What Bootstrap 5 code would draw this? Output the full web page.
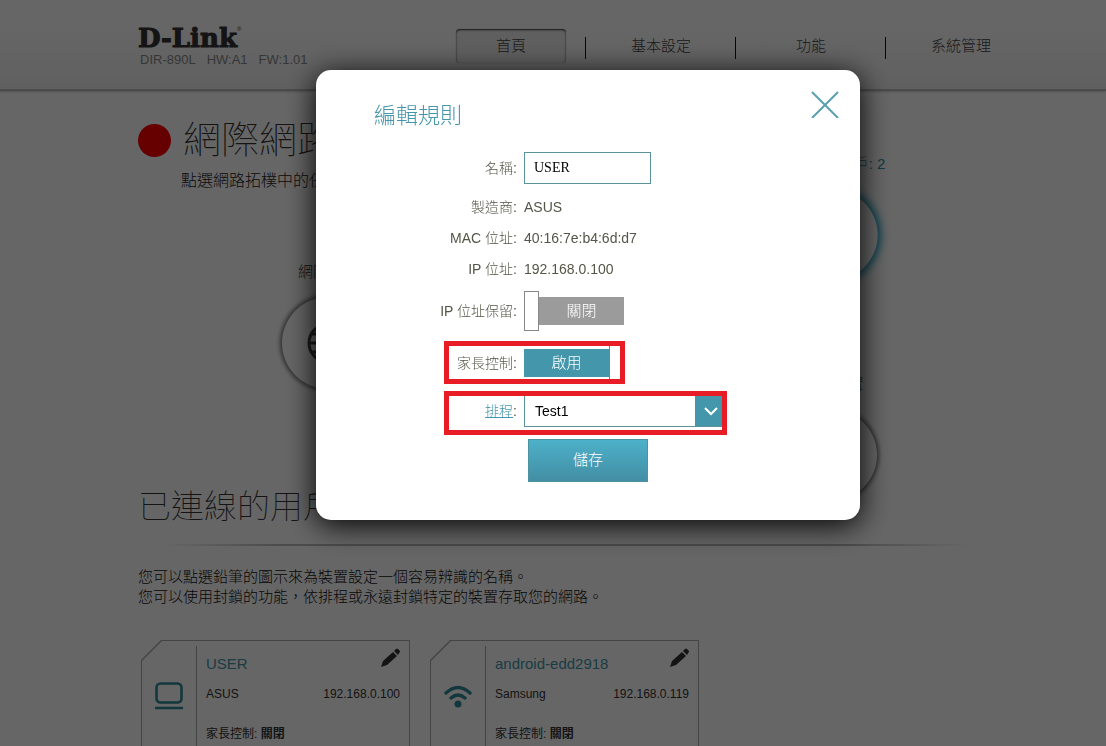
<!DOCTYPE html>
<html lang="zh-Hant">
<head>
<meta charset="utf-8">
<meta name="viewport" content="width=device-width, initial-scale=1">
<title>D-Link</title>
<link href="https://cdn.jsdelivr.net/npm/bootstrap@5.3.0/dist/css/bootstrap.min.css" rel="stylesheet">
<style>
  :root { --teal: #4497ab; --ink: #333; --sans: "Liberation Sans", "Noto Sans CJK TC", sans-serif; }
  body { font-family: var(--sans); color: var(--ink); font-size: 15px; line-height: 20px; background: #fff; }
  .shell { max-width: 926px; }
  .inset { padding-left: 48px; }
  a { color: var(--teal); }

  .site-head { height: 91px; background: linear-gradient(#fff 30%, #f0f0f0); border-bottom: 2px solid #bbb; box-shadow: 0 1px 2px #ccc; }
  .brand { font: bold 26px/26px "DejaVu Serif", serif; color: #333; -webkit-text-stroke: 1px #333; padding-top: 25px; }
  .brand sup { font: 6px/6px var(--sans); top: -16px; -webkit-text-stroke: 0; }
  .model { font-size: 13px; line-height: 18px; color: #888; gap: 11px; padding-left: 2px; }
  .tabs { padding-top: 29px; }
  .tabs a { width: 110px; height: 34px; line-height: 34px; color: #444; font-weight: 300; text-align: center; text-decoration: none; border-radius: 4px; }
  .tabs a.active { background: #eee; box-shadow: inset 0 1px 2px #333, 0 0 1px #888; }
  .tabs .bar { width: 1px; height: 22px; margin: 0 20px 0 19px; background: #111; }

  .topology { min-height: 391px; padding-top: 24px; }
  .lamp { width: 33px; height: 33px; border-radius: 50%; background: #f00; }
  .big-title { font-size: 38px; line-height: 50px; font-weight: 100; margin: 0; }
  .hint { font-size: 16px; line-height: 20px; margin: 6px 0 0 43px; font-weight: 300; color: #222; }
  .node { position: absolute; transform: translateX(-50%); text-align: center; white-space: nowrap; font-weight: 300; }
  .node .disc { width: 92px; height: 92px; margin: 15px auto 0; border-radius: 50%; background: #fff; box-shadow: 0 0 4px 2px #777; display: flex; align-items: center; justify-content: center; }
  .node .disc.live { box-shadow: 0 0 9px 3px #159fc0; }
  .n-net { left: 190px; top: 171px; }
  .n-cli { left: 694px; top: 63px; color: #2b8fa6; }
  .n-usb { left: 693px; top: 283px; }

  .sub-title { font-size: 33px; line-height: 50px; font-weight: 100; margin: 0; }
  .rule { height: 2px; margin: 12px 48px 21px 24px; background: linear-gradient(90deg, transparent, #bbb 15%, #bbb 85%, transparent); }
  .para { margin: 0; font-weight: 300; color: #111; }

  .clients { padding: 33px 0 0 3px; gap: 20px; }
  .client { position: relative; width: 269px; height: 135px; background: #aaa; clip-path: polygon(20px 0, 100% 0, 100% 100%, 0 100%, 0 20px); }
  .client::before { content: ""; position: absolute; inset: 1px; background: #fff; clip-path: polygon(20px 0, 100% 0, 100% 100%, 0 100%, 0 20px); }
  .client > * { position: relative; }
  .client .ico { width: 56px; margin-top: 6px; border-right: 1px solid #aaa; }
  .client .ico svg { margin-top: 34px; }
  .client .info { padding: 8px 10px 0 9px; font-size: 12px; }
  .client .who { font-size: 15px; text-decoration: none; padding-top: 6px; }
  .client .meta { margin-top: 10px; }
  .client .guard { margin-top: 20px; font-size: 12px; }
  .client .edit { border: 0; background: none; padding: 0; line-height: 0; height: 20px; }

  .modal-backdrop.show { opacity: .6; }
  .modal { padding-left: 70px; }
  .rule-dialog { max-width: 544px; margin: 70px auto 0; }
  .rule-dialog .modal-content { border: 0; border-radius: 15px; padding-bottom: 38px; color: #555548; font-size: 14px; box-shadow: 0 5px 30px #000; }
  .dialog-top { padding: 20px 21px 16px 58px; }
  .dialog-top h2 { font-size: 22px; line-height: 40px; margin: 6px 0 0; font-weight: 300; color: var(--teal); }
  .close-x { border: 0; background: none; padding: 0; line-height: 0; height: 28px; }
  .line { position: relative; display: grid; grid-template-columns: 201px 1fr; column-gap: 7px; align-items: center; min-height: 31px; }
  .line > :first-child { text-align: right; font-weight: 300; }
  .line + .line { margin-top: 12px; }
  .line.plain + .line.plain { margin-top: 0; }
  .line.snug + .line.snug { margin-top: 7px; }
  .name-box { width: 127px; height: 32px; border: 1px solid #5a939b; border-radius: 0; padding: 0 9px; font: 14px "Liberation Serif", serif; color: #000; }
  .flip { width: 100px; height: 40px; cursor: pointer; color: #fff; font-size: 15px; }
  .flip .face { height: 28px; line-height: 28px; background: #9b9b9b; text-align: center; font-weight: 300; }
  .flip .knob { width: 15px; height: 40px; background: #fff; border: 1px solid #888; }
  .btn-check:checked + .flip { flex-direction: row-reverse; }
  .btn-check:checked + .flip .face { background: var(--teal); }
  .btn-check:checked + .flip .knob { border-color: var(--teal); }
  .pick { width: 199px; height: 32px; border: 1px solid #5a939b; padding: 0 38px 0 10px; appearance: none; color: #000; font-size: 14px;
    background: url("data:image/svg+xml,%3Csvg xmlns='http://www.w3.org/2000/svg' width='14' height='9'%3E%3Cpath d='M1 1l6 6 6-6' fill='none' stroke='white' stroke-width='2'/%3E%3C/svg%3E") no-repeat right 4px center, linear-gradient(var(--teal), var(--teal)) no-repeat right / 27px 100%, #fff; }
  .ringed::after { content: ""; position: absolute; left: 128px; border: 5px solid #e81c24; pointer-events: none; }
  .ring-a::after { top: -2px; width: 181px; height: 43px; }
  .ring-b::after { top: -4px; width: 283px; height: 44px; }
  .save { width: 120px; height: 43px; margin: 12px 0 0 212px; border: 1px solid #4c93a2; border-radius: 0; padding: 0; color: #fff; font-size: 15px; font-weight: 300; background: linear-gradient(#4cb1c9, #438ea4); }
</style>
</head>
<body class="overflow-hidden vh-100">

<header class="site-head">
  <div class="shell inset mx-auto d-flex justify-content-between">
    <div>
      <div class="brand">D-Link<sup>®</sup></div>
      <div class="model d-flex"><span>DIR-890L</span><span>HW:A1</span><span>FW:1.01</span></div>
    </div>
    <nav class="tabs d-flex">
      <a href="#" class="active">首頁</a>
      <span class="bar mt-2"></span><a href="#">基本設定</a>
      <span class="bar mt-2"></span><a href="#">功能</a>
      <span class="bar mt-2"></span><a href="#">系統管理</a>
    </nav>
  </div>
</header>

<main class="shell inset mx-auto">
  <section class="topology position-relative">
    <div class="d-flex align-items-center gap-2">
      <span class="lamp"></span>
      <h1 class="big-title ms-1">網際網路</h1>
    </div>
    <p class="hint">點選網路拓樸中的任一圖示</p>

    <div class="node n-net">網際網路
      <div class="disc">
        <svg width="44" height="44" viewBox="0 0 44 44" fill="none" stroke="#444" stroke-width="3"><circle cx="22" cy="22" r="19"/><ellipse cx="22" cy="22" rx="9" ry="19"/><path d="M3 22h38M22 3v38M6 13h32M6 31h32"/></svg>
      </div>
    </div>
    <div class="node n-cli">已連線的用戶: 2
      <div class="disc live"></div>
    </div>
    <div class="node n-usb">USB 裝置
      <div class="disc"></div>
    </div>
  </section>

  <h2 class="sub-title">已連線的用戶</h2>
  <div class="rule"></div>
  <p class="para">您可以點選鉛筆的圖示來為裝置設定一個容易辨識的名稱。</p>
  <p class="para">您可以使用封鎖的功能，依排程或永遠封鎖特定的裝置存取您的網路。</p>

  <div class="clients d-flex">
    <article class="client d-flex">
      <div class="ico text-center">
        <svg width="30" height="30" viewBox="0 0 30 30" fill="none" stroke="#2f8b99" stroke-width="2.6"><rect x="2.500" y="3.500" width="25" height="19" rx="4"/><path d="M1 28h28"/></svg>
      </div>
      <div class="info flex-grow-1">
        <div class="d-flex justify-content-between">
          <a class="who" href="#">USER</a>
          <button class="edit" type="button" aria-label="編輯"><svg width="20" height="20" viewBox="0 0 20 20" fill="#333"><path d="M1 19l2-6L13 4l4 4L7 17zM14 3l2-2q1-1 2 0l1.500 1.500q1 1 0 2L18 7z"/></svg></button>
        </div>
        <div class="meta d-flex justify-content-between"><span>ASUS</span><span>192.168.0.100</span></div>
        <div class="guard">家長控制: <b>關閉</b></div>
      </div>
    </article>
    <article class="client d-flex">
      <div class="ico text-center">
        <svg width="30" height="30" viewBox="0 0 30 30" fill="none" stroke="#2f8b99" stroke-width="3.400" stroke-linecap="round"><path d="M3 13Q15 2 27 13M8 18Q15 12 22 18"/><circle cx="15" cy="24" r="3.500" fill="#2f8b99" stroke="none"/></svg>
      </div>
      <div class="info flex-grow-1">
        <div class="d-flex justify-content-between">
          <a class="who" href="#">android-edd2918</a>
          <button class="edit" type="button" aria-label="編輯"><svg width="20" height="20" viewBox="0 0 20 20" fill="#333"><path d="M1 19l2-6L13 4l4 4L7 17zM14 3l2-2q1-1 2 0l1.500 1.500q1 1 0 2L18 7z"/></svg></button>
        </div>
        <div class="meta d-flex justify-content-between"><span>Samsung</span><span>192.168.0.119</span></div>
        <div class="guard">家長控制: <b>關閉</b></div>
      </div>
    </article>
  </div>
</main>

<div class="modal-backdrop show"></div>
<div class="modal show d-block overflow-hidden" tabindex="-1" role="dialog" aria-labelledby="dlgTitle">
  <div class="modal-dialog rule-dialog">
    <form class="modal-content">
      <div class="dialog-top d-flex justify-content-between">
        <h2 id="dlgTitle">編輯規則</h2>
        <button class="close-x" type="button" aria-label="關閉"><svg width="28" height="28" viewBox="0 0 28 28" stroke="#5a9fb0" stroke-width="2"><path d="M1 2l26 26M27 2L1 28"/></svg></button>
      </div>
      <div class="dialog-rows d-flex flex-column">
        <div class="line snug"><label for="nm">名稱:</label><input id="nm" class="name-box" type="text" value="USER"></div>
        <div class="line plain snug"><span>製造商:</span><span>ASUS</span></div>
        <div class="line plain"><span>MAC 位址:</span><span>40:16:7e:b4:6d:d7</span></div>
        <div class="line plain snug"><span>IP 位址:</span><span>192.168.0.100</span></div>
        <div class="line snug"><span>IP 位址保留:</span>
          <div><input class="btn-check" type="checkbox" id="keep"><label for="keep" class="flip d-flex align-items-center" aria-label="IP 位址保留"><span class="knob"></span><span class="face flex-grow-1">關閉</span></label></div>
        </div>
        <div class="line ringed ring-a"><span>家長控制:</span>
          <div><input class="btn-check" type="checkbox" id="guard" checked><label for="guard" class="flip d-flex align-items-center" aria-label="家長控制"><span class="knob"></span><span class="face flex-grow-1">啟用</span></label></div>
        </div>
        <div class="line ringed ring-b"><label for="plan"><a href="#">排程</a>:</label>
          <select id="plan" class="pick"><option>Test1</option></select>
        </div>
      </div>
      <button class="save btn" type="submit">儲存</button>
    </form>
  </div>
</div>

<script src="https://cdn.jsdelivr.net/npm/bootstrap@5.3.0/dist/js/bootstrap.bundle.min.js"></script>
</body>
</html>
